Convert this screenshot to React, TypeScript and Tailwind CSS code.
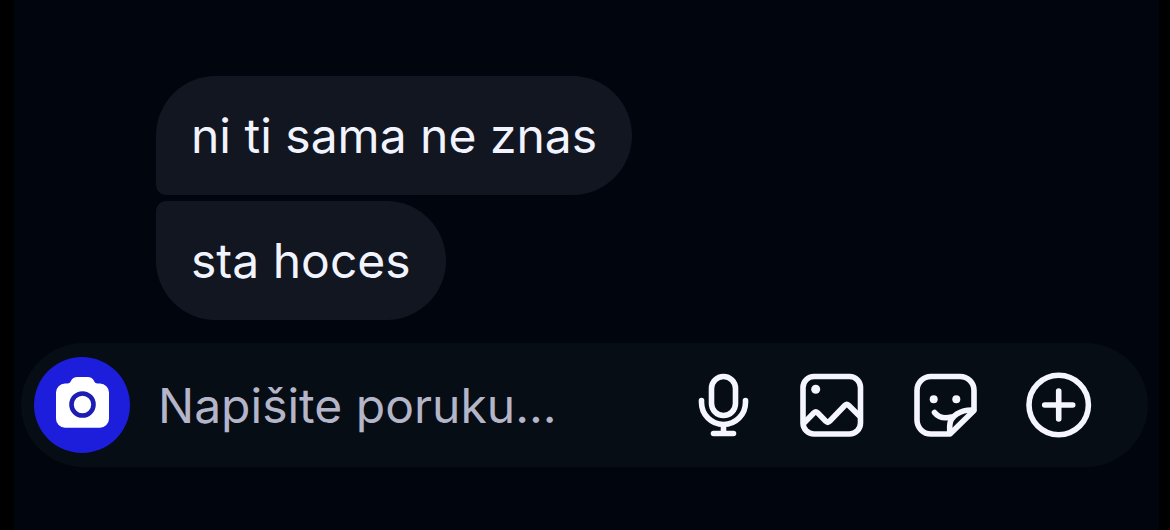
import React, { useState } from 'react';

const messages = ['ni ti sama ne znas', 'sta hoces'];

const CameraIcon = () => (
    <svg viewBox="0 0 96 96" className="w-24 h-24" aria-hidden="true">
        <path
            d="M31 26.500h2.500c1.500 0 2.600-.8 3.300-2.200 1.500-3 3.400-4.300 6.700-4.300h10c3.300 0 5.200 1.300 6.700 4.300.7 1.400 1.800 2.200 3.300 2.200H66a9 9 0 0 1 9 9v26.200a9 9 0 0 1-9 9H31a9 9 0 0 1-9-9V35.500a9 9 0 0 1 9-9z"
            fill="#fff"
        />
        <circle cx="48.500" cy="47.500" r="11" fill="none" stroke="#1d1db4" strokeWidth="4.600" />
    </svg>
);

const MicIcon = () => (
    <svg viewBox="-1 0 54 66" className="w-[54px] h-[66px]" fill="none" stroke="currentColor" strokeWidth="5.600" strokeLinecap="round" strokeLinejoin="round" aria-hidden="true">
        <rect x="14.500" y="4.500" width="24" height="39" rx="12" />
        <path d="M4.500 28.500v2a22 22 0 0 0 44 0v-2M26.500 52.500v9M16.500 61.500h20" />
    </svg>
);

const ImageIcon = () => (
    <svg viewBox="-1 0 66 66" className="w-[66px] h-[66px]" fill="none" stroke="currentColor" strokeWidth="5.600" strokeLinecap="round" strokeLinejoin="round" aria-hidden="true">
        <rect x="4" y="4.500" width="57.500" height="57.500" rx="11" />
        <circle cx="16.700" cy="17.300" r="4.500" fill="currentColor" stroke="none" />
        <path d="M5 51l10-10.300q1.800-1.700 3.600 0l8.200 8.600q1.900 1.800 3.800 0L46 33.200q1.800-1.700 3.600 0L61 44.500" />
    </svg>
);

const StickerIcon = () => (
    <svg viewBox="-1 0 66 66" className="w-[66px] h-[66px]" fill="none" stroke="currentColor" strokeWidth="5.600" strokeLinecap="round" strokeLinejoin="round" aria-hidden="true">
        <path d="M37 62H18A14 14 0 0 1 4 48V18.500a14 14 0 0 1 14-14h29a14 14 0 0 1 14 14V38.500L37 62z" />
        <path d="M60.500 38C48 37.500 37 43.500 36.700 54v7" />
        <path d="M21.500 40.500c3.500 4.500 9 6.500 17 4.500" />
        <circle cx="20.700" cy="27.300" r="4" fill="currentColor" stroke="none" />
        <circle cx="43.300" cy="27.300" r="4" fill="currentColor" stroke="none" />
    </svg>
);

const PlusIcon = () => (
    <svg viewBox="0 0 66 66" className="w-[66px] h-[66px]" fill="none" stroke="currentColor" strokeWidth="5.600" strokeLinecap="round" aria-hidden="true">
        <circle cx="32.700" cy="33" r="29.700" />
        <path d="M32.700 19v28M18.700 33h28" />
    </svg>
);

const actions = [
    { label: 'Glasovna poruka', icon: <MicIcon /> },
    { label: 'Galerija', icon: <ImageIcon /> },
    { label: 'Naljepnice', icon: <StickerIcon /> },
    { label: 'Više', icon: <PlusIcon /> },
];

export default function App() {
    const [text, setText] = useState('');

    return (
        <div className="min-h-screen bg-black pl-[14px] pr-[11px] flex font-['Inter',sans-serif]">
            <main className="flex-1 min-w-0 bg-[#01060e] pt-[76px]">
                {/* Messages */}
                <ul className="flex flex-col items-start gap-[6px] pl-[142px]">
                    {messages.map((message, i) => (
                        <li
                            key={message}
                            className={`bg-[#111620] text-[#f1f3fe] text-[48px] leading-[63px] px-[35px] py-7 rounded-r-[60px] ${
                                i === 0 ? 'rounded-tl-[60px] rounded-bl-[10px]' : 'rounded-tl-[10px] rounded-bl-[60px]'
                            }`}
                        >
                            {message}
                        </li>
                    ))}
                </ul>

                {/* Composer */}
                <form
                    onSubmit={e => e.preventDefault()}
                    className="mt-[23px] ml-[7px] mr-[11px] flex items-center rounded-full bg-[#070d14] py-[14px] pl-[13px] pr-14"
                >
                    <button type="button" aria-label="Kamera" className="shrink-0 rounded-full bg-[#1c1edc]">
                        <CameraIcon />
                    </button>
                    <input
                        type="text"
                        aria-label="Poruka"
                        placeholder="Napišite poruku..."
                        value={text}
                        onChange={e => setText(e.target.value)}
                        className="flex-1 min-w-0 ml-7 bg-transparent text-[48px] leading-[63px] text-[#f1f3fe] placeholder:text-[#b4b5c8] outline-none"
                    />
                    <div className="flex items-center gap-12 shrink-0 text-[#f4f5ff]">
                        {actions.map(action => (
                            <button key={action.label} type="button" aria-label={action.label}>
                                {action.icon}
                            </button>
                        ))}
                    </div>
                </form>
            </main>
        </div>
    );
}
